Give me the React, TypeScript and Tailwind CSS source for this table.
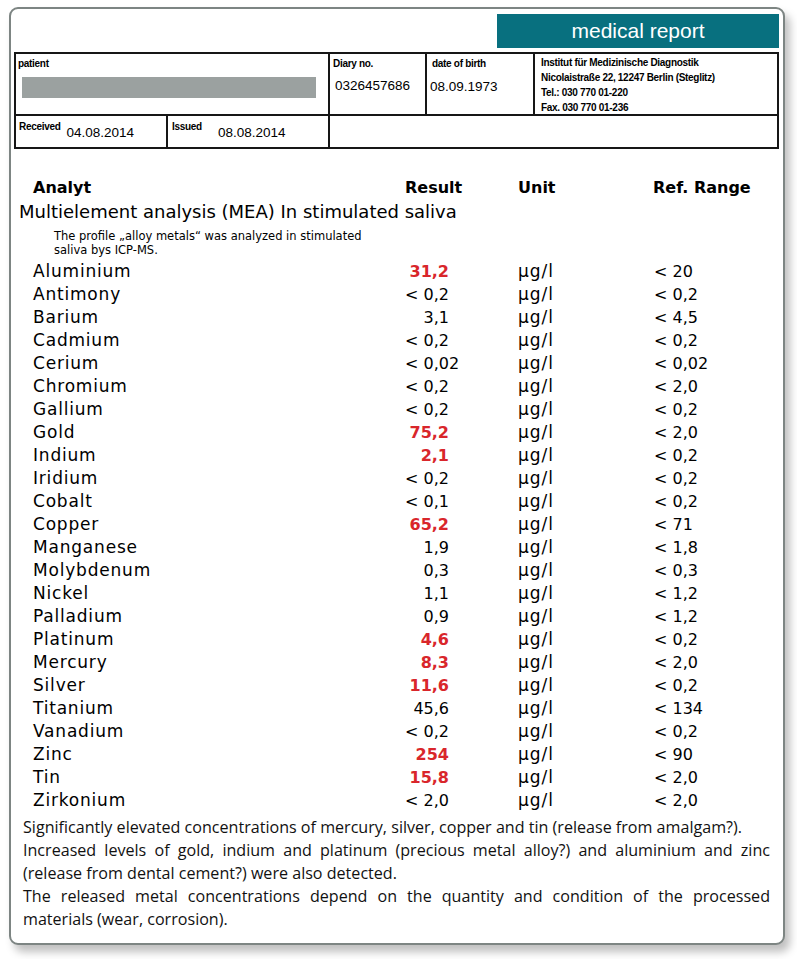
import React from "react";

const rows: [string, string, boolean, string][] = [
  ["Aluminium", "31,2", true, "< 20"],
  ["Antimony", "< 0,2", false, "< 0,2"],
  ["Barium", "3,1", false, "< 4,5"],
  ["Cadmium", "< 0,2", false, "< 0,2"],
  ["Cerium", "< 0,02", false, "< 0,02"],
  ["Chromium", "< 0,2", false, "< 2,0"],
  ["Gallium", "< 0,2", false, "< 0,2"],
  ["Gold", "75,2", true, "< 2,0"],
  ["Indium", "2,1", true, "< 0,2"],
  ["Iridium", "< 0,2", false, "< 0,2"],
  ["Cobalt", "< 0,1", false, "< 0,2"],
  ["Copper", "65,2", true, "< 71"],
  ["Manganese", "1,9", false, "< 1,8"],
  ["Molybdenum", "0,3", false, "< 0,3"],
  ["Nickel", "1,1", false, "< 1,2"],
  ["Palladium", "0,9", false, "< 1,2"],
  ["Platinum", "4,6", true, "< 0,2"],
  ["Mercury", "8,3", true, "< 2,0"],
  ["Silver", "11,6", true, "< 0,2"],
  ["Titanium", "45,6", false, "< 134"],
  ["Vanadium", "< 0,2", false, "< 0,2"],
  ["Zinc", "254", true, "< 90"],
  ["Tin", "15,8", true, "< 2,0"],
  ["Zirkonium", "< 2,0", false, "< 2,0"],
];

const narrow = "font-['Liberation_Sans_Narrow','Liberation_Sans',sans-serif]";
const arial = "font-['Liberation_Sans',Arial,sans-serif]";
const gothic = "font-['DejaVu_Sans',sans-serif]";

export default function App() {
  return (
    <div className="bg-white w-[797px] h-[959px] pt-[7px] pl-[9px]">
      <div className="w-[776px] h-[938px] border-2 border-[#7d8583] rounded-[9px] bg-white shadow-[5px_7px_8px_rgba(0,0,0,0.25)] flex flex-col">
        {/* title */}
        <div className={`mt-[5px] ml-[486px] w-[282px] h-[34px] bg-[#08707f] text-white text-[21px] flex items-center justify-center ${arial}`}>
          medical report
        </div>
        {/* header table */}
        <div className={`mt-[4px] ml-[3px] w-[765px] border-2 border-[#161616] text-black ${narrow}`}>
          <div className="flex h-[62px] border-b-2 border-[#161616]">
            <div className="w-[314px] border-r-2 border-[#161616] pl-[2px] pt-[4px]">
              <div className="text-[10px] leading-[12px] font-bold tracking-[-0.3px]">patient</div>
              <div className="mt-[7px] ml-[4px] w-[294px] h-[21px] bg-[#9ba1a0]" />
            </div>
            <div className="w-[97px] border-r-2 border-[#161616] pl-[3px] pt-[4px]">
              <div className="text-[10px] leading-[12px] font-bold tracking-[-0.3px]">Diary no.</div>
              <div className={`mt-[8px] ml-[2px] text-[13.5px] leading-[15px] ${arial}`}>0326457686</div>
            </div>
            <div className="w-[108px] border-r-2 border-[#161616] pl-[5px] pt-[4px]">
              <div className="text-[10px] leading-[12px] font-bold tracking-[-0.3px]">date of birth</div>
              <div className={`mt-[9px] -ml-[2px] text-[13.5px] leading-[15px] ${arial}`}>08.09.1973</div>
            </div>
            <div className="flex-1 pl-[6px] pt-[1px] text-[10px] leading-[15px] font-bold tracking-[-0.3px]">
              <div>Institut für Medizinische Diagnostik</div>
              <div>Nicolaistraße 22, 12247 Berlin (Steglitz)</div>
              <div>Tel.: 030 770 01-220</div>
              <div>Fax. 030 770 01-236</div>
            </div>
          </div>
          <div className="flex h-[31px]">
            <div className="w-[152px] border-r-2 border-[#161616] pl-[3px] flex items-start">
              <span className="mt-[5px] text-[10px] leading-[12px] font-bold tracking-[-0.3px]">Received</span>
              <span className={`ml-[6px] mt-[9px] text-[13.5px] leading-[15px] ${arial}`}>04.08.2014</span>
            </div>
            <div className="w-[162px] border-r-2 border-[#161616] pl-[4px] flex items-start">
              <span className="mt-[5px] text-[10px] leading-[12px] font-bold tracking-[-0.3px]">Issued</span>
              <span className={`ml-[16px] mt-[9px] text-[13.5px] leading-[15px] ${arial}`}>08.08.2014</span>
            </div>
            <div className="flex-1" />
          </div>
        </div>

        {/* results */}
        <div className={`mt-[27px] text-black ${gothic}`}>
          <div className="flex pl-[22px] text-[16px] leading-[23px] font-bold">
            <div className="w-[372px]">Analyt</div>
            <div className="w-[113px]">Result</div>
            <div className="w-[135px]">Unit</div>
            <div>Ref. Range</div>
          </div>
          <div className="mt-[1px] pl-[8px] text-[18px] leading-[23px]">Multielement analysis (MEA) In stimulated saliva</div>
          <div className="pl-[43px] mt-[6px] text-[11.5px] leading-[14px] w-[380px]">
            The profile „alloy metals“ was analyzed in stimulated saliva bys ICP-MS.
          </div>
          <div className="mt-[3px]">
            {rows.map(([name, res, hi, ref]) => (
              <div key={name} className="flex items-center pl-[22px] text-[16px] leading-[23px] h-[23px]">
                <div className="w-[372px] text-[17px] tracking-[0.8px]">{name}</div>
                <div className={`w-[44px] whitespace-nowrap ${res.startsWith("<") ? "text-left" : "text-right"} ${hi ? "text-[#d9262b] font-bold" : ""}`}>
                  {res}
                </div>
                <div className="w-[69px]" />
                <div className="w-[136px] text-[17px] tracking-[1px]">µg/l</div>
                <div>{ref}</div>
              </div>
            ))}
          </div>
        </div>

        {/* conclusion */}
        <div className="mt-[4px] pl-[12px] w-[759px] text-[16.1px] leading-[23px] text-[#111] font-['Open_Sans',sans-serif]">
          <p className="whitespace-nowrap">Significantly elevated concentrations of mercury, silver, copper and tin (release from amalgam?).</p>
          <p className="text-justify">
            Increased levels of gold, indium and platinum (precious metal alloy?) and aluminium and zinc (release from dental cement?) were also detected.
          </p>
          <p className="text-justify">
            The released metal concentrations depend on the quantity and condition of the processed materials (wear, corrosion).
          </p>
        </div>
      </div>
    </div>
  );
}
